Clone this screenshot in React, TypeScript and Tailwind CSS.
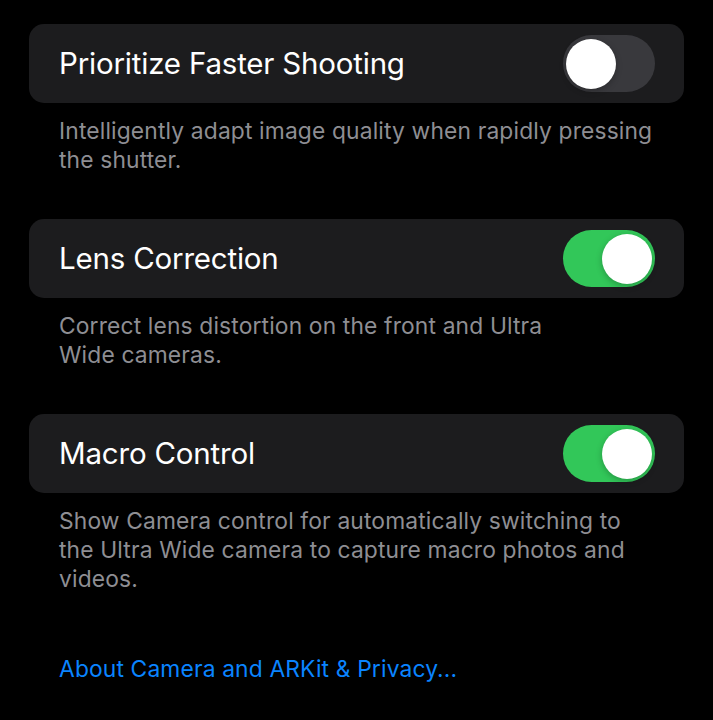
import React from "react";

type Row = { title: string; on: boolean; note: string[] };

const rows: Row[] = [
  {
    title: "Prioritize Faster Shooting",
    on: false,
    note: ["Intelligently adapt image quality when rapidly pressing", "the shutter."],
  },
  {
    title: "Lens Correction",
    on: true,
    note: ["Correct lens distortion on the front and Ultra", "Wide cameras."],
  },
  {
    title: "Macro Control",
    on: true,
    note: [
      "Show Camera control for automatically switching to",
      "the Ultra Wide camera to capture macro photos and",
      "videos.",
    ],
  },
];

function Toggle({ on }: { on: boolean }) {
  return (
    <div
      className={
        on
          ? "flex h-[57px] w-[92px] items-center justify-end rounded-full bg-[#32c759] px-[3px]"
          : "flex h-[57px] w-[92px] items-center justify-start rounded-full bg-[#39393d] px-[3px]"
      }
    >
      <div className="h-[50px] w-[50px] rounded-full bg-white shadow-[0_2px_6px_rgba(0,0,0,0.25)]" />
    </div>
  );
}

export default function App() {
  return (
    <div
      className="min-h-[720px] w-full bg-black px-[29px] pt-[24px] antialiased"
      style={{ fontFamily: "Inter, 'Noto Sans', sans-serif" }}
    >
      <div className="flex flex-col gap-[45px]">
        {rows.map((r) => (
          <div key={r.title} className="flex flex-col">
            <div className="flex h-[79px] items-center justify-between rounded-[15px] bg-[#1c1c1e] pl-[30px] pr-[29px]">
              <span className="pt-[1px] text-[29.5px] leading-none tracking-[-0.2px] text-white">{r.title}</span>
              <Toggle on={r.on} />
            </div>
            <p className="mt-[13px] whitespace-nowrap pl-[30px] text-[22.8px] leading-[29px] tracking-[0.15px] text-[#8e8e93]">
              {r.note.map((line, i) => (
                <React.Fragment key={i}>
                  {i > 0 && <br />}
                  {line}
                </React.Fragment>
              ))}
            </p>
          </div>
        ))}
      </div>
      <div className="mt-[61px] pl-[30px] text-[22.8px] leading-[29px] tracking-[0.15px] text-[#0a84ff]">
        About Camera and ARKit &amp; Privacy...
      </div>
    </div>
  );
}
